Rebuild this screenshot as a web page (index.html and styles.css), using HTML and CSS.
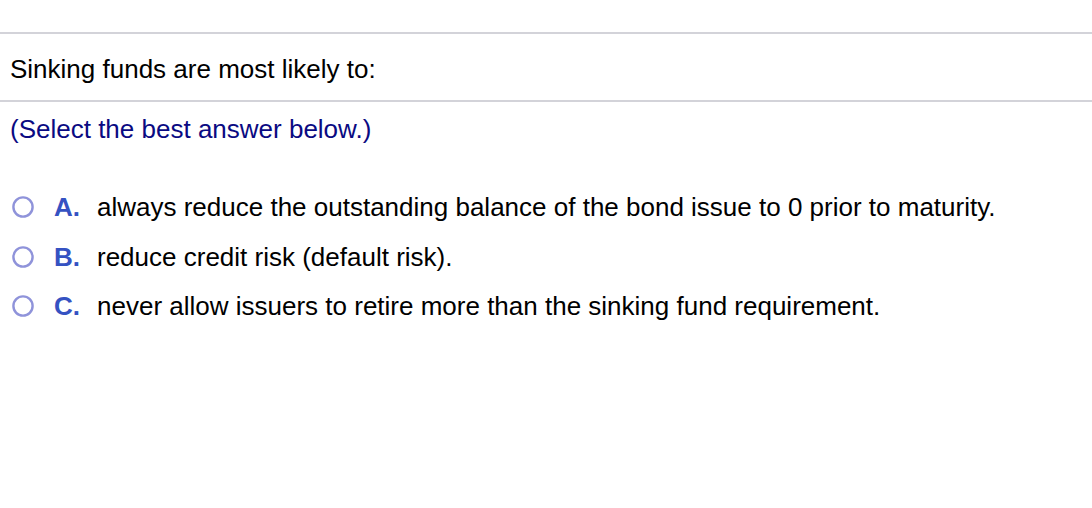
FILE: index.html
```html
<!DOCTYPE html>
<html>
<head>
<meta charset="utf-8">
<link rel="stylesheet" href="styles.css">
</head>
<body>
<div class="topbar"></div>
<div class="question">Sinking funds are most likely to:</div>
<div class="answers">
  <div class="instruction">(Select the best answer below.)</div>
  <div class="options">
    <div class="option">
      <span class="radio"><svg width="22" height="22" viewBox="0 0 22 22"><circle cx="11" cy="11" r="9.6" fill="#fff" stroke="#8f93da" stroke-width="2.4"/></svg></span>
      <span class="label">A.</span>
      <span class="text">always reduce the outstanding balance of the bond issue to 0 prior to maturity.</span>
    </div>
    <div class="option">
      <span class="radio"><svg width="22" height="22" viewBox="0 0 22 22"><circle cx="11" cy="11" r="9.6" fill="#fff" stroke="#8f93da" stroke-width="2.4"/></svg></span>
      <span class="label">B.</span>
      <span class="text">reduce credit risk (default risk).</span>
    </div>
    <div class="option">
      <span class="radio"><svg width="22" height="22" viewBox="0 0 22 22"><circle cx="11" cy="11" r="9.6" fill="#fff" stroke="#8f93da" stroke-width="2.4"/></svg></span>
      <span class="label">C.</span>
      <span class="text">never allow issuers to retire more than the sinking fund requirement.</span>
    </div>
  </div>
</div>
</body>
</html>
```
FILE: styles.css
```css
html, body {
  margin: 0;
  padding: 0;
  background: #ffffff;
}
body {
  font-family: "Liberation Sans", Arial, Helvetica, sans-serif;
  font-size: 26px;
  line-height: 30px;
  color: #000000;
}
.topbar {
  height: 32px;
  border-bottom: 2px solid #d3d3d9;
}
.question {
  padding: 20px 10px 16px 10px;
  border-bottom: 2px solid #d3d3d9;
}
.answers {
  padding: 12px 0 0 0;
}
.instruction {
  padding-left: 10px;
  color: #0a0a82;
}
.options {
  margin-top: 48px;
  display: flex;
  flex-direction: column;
  gap: 19.5px;
}
.option {
  display: flex;
  align-items: center;
  padding-left: 12px;
}
.radio {
  display: flex;
  width: 22px;
  height: 22px;
  margin-right: 20px;
}
.label {
  width: 43px;
  font-weight: bold;
  color: #3552c2;
}
.text {
  color: #000000;
}
```
